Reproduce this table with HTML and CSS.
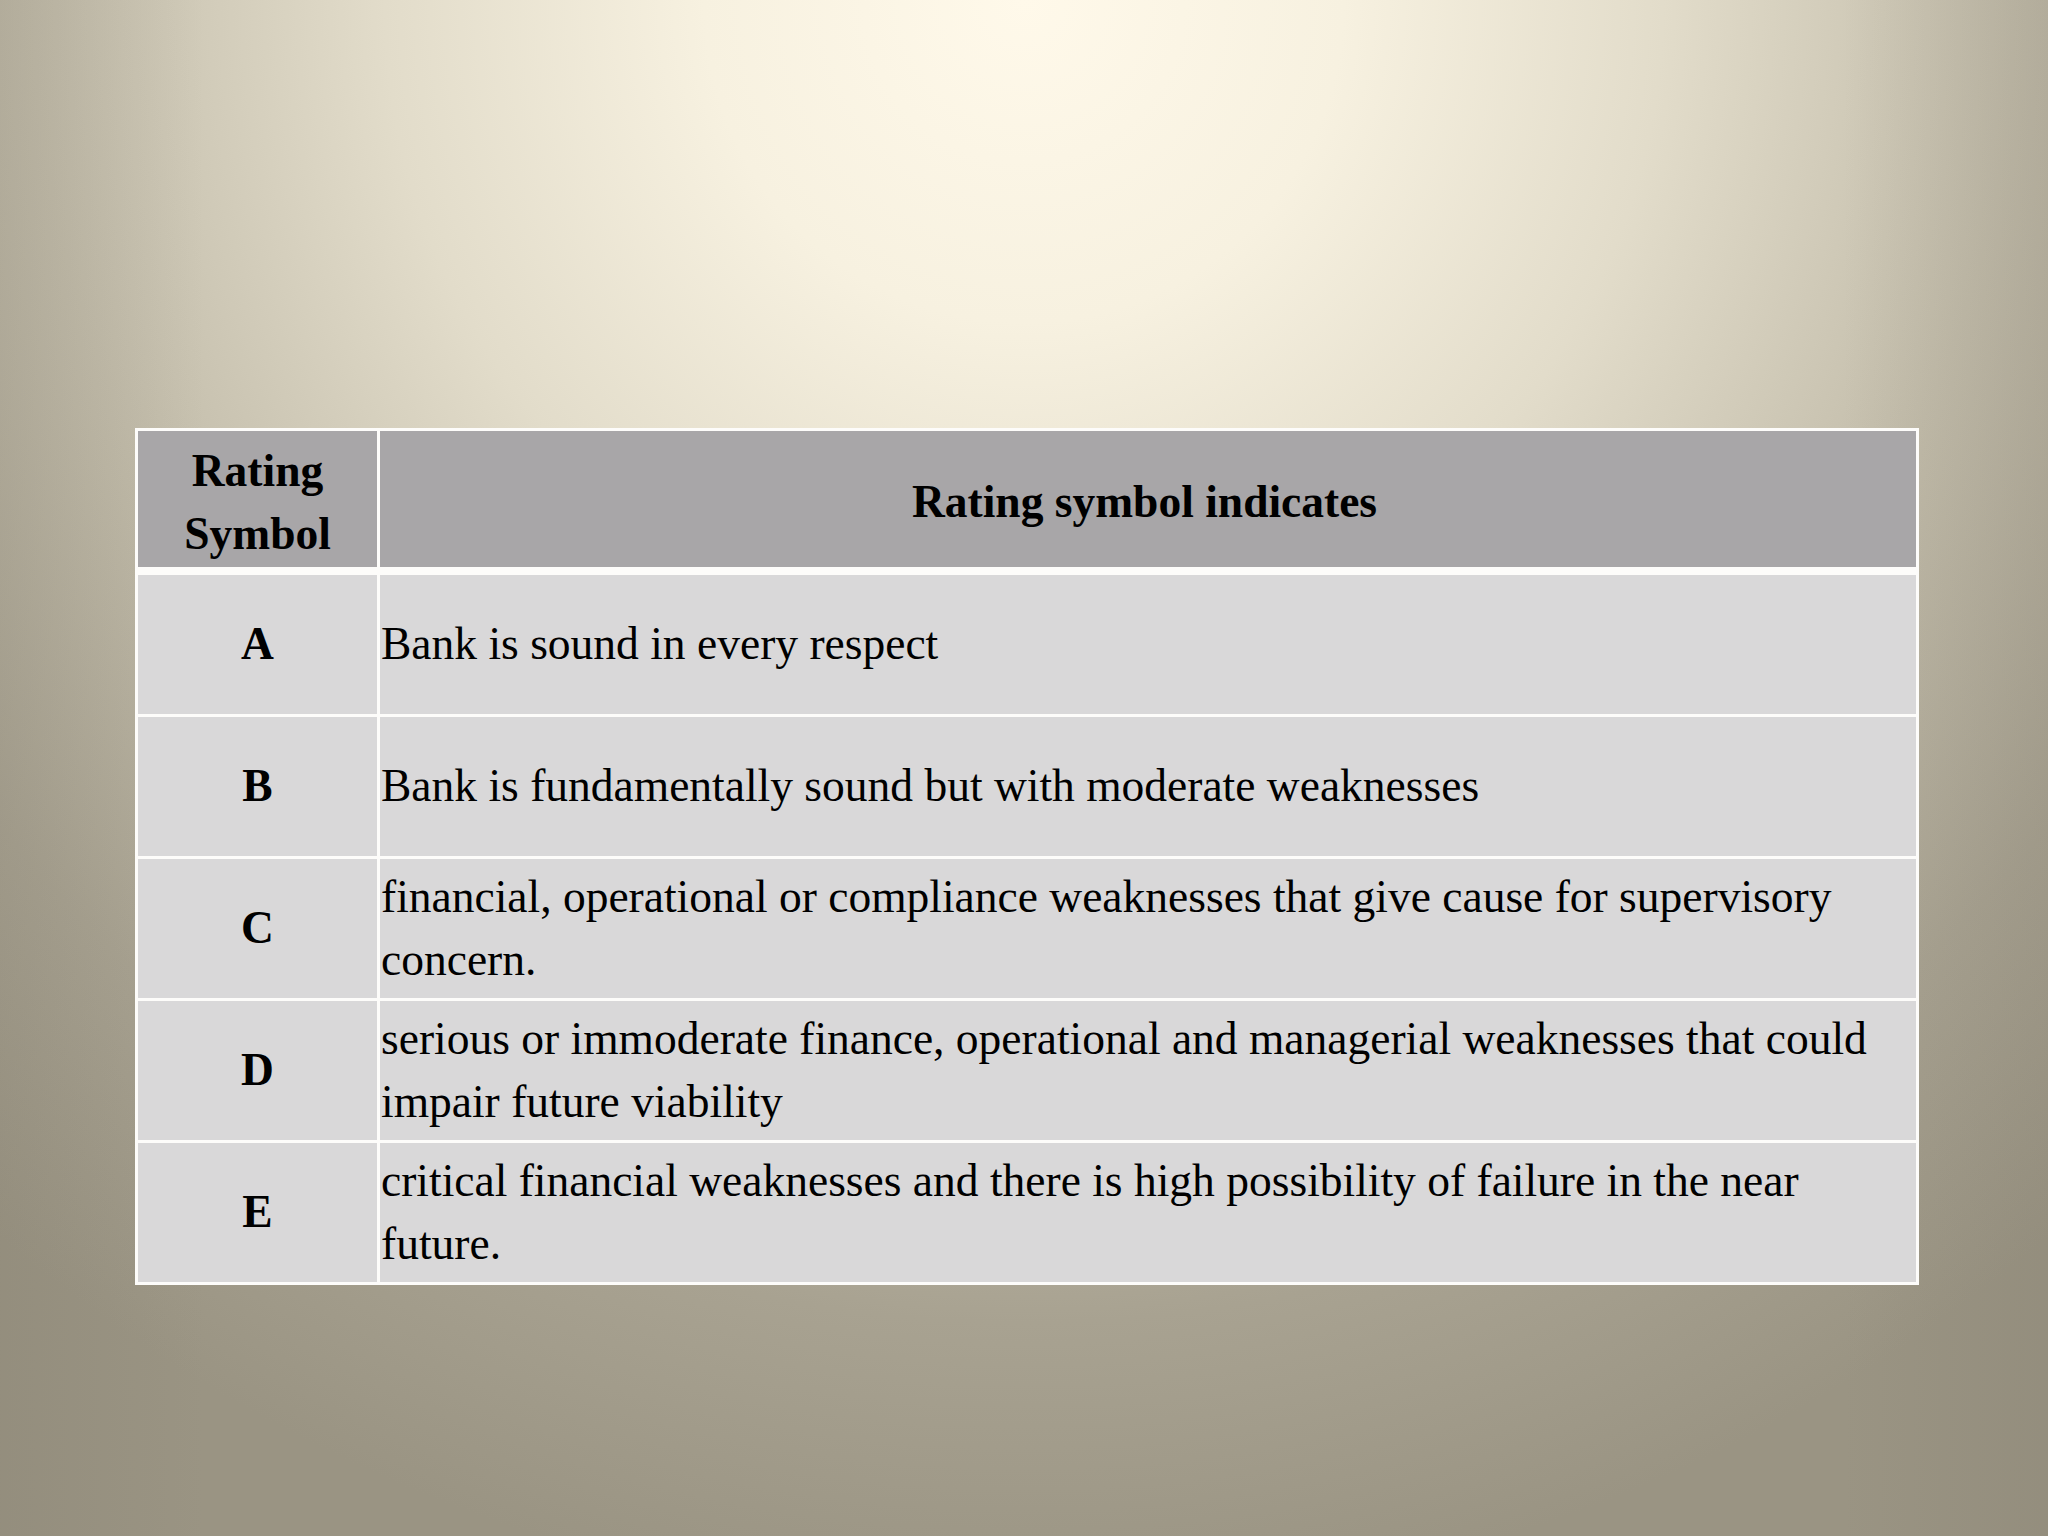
FILE: index.html
```html
<!DOCTYPE html>
<html lang="en">
<head>
<meta charset="utf-8">
<title>Rating Symbols</title>
<link rel="stylesheet" href="styles.css">
</head>
<body>
<main class="slide">
  <div class="rating-table">
    <div class="cell head sym">Rating Symbol</div>
    <div class="cell head desc">Rating symbol indicates</div>

    <div class="cell sym">A</div>
    <div class="cell desc">Bank is sound in every respect</div>

    <div class="cell sym">B</div>
    <div class="cell desc">Bank is fundamentally sound but with moderate weaknesses</div>

    <div class="cell sym">C</div>
    <div class="cell desc">financial, operational or compliance weaknesses that give cause for supervisory concern.</div>

    <div class="cell sym">D</div>
    <div class="cell desc">serious or immoderate finance, operational and managerial weaknesses that could impair future viability</div>

    <div class="cell sym">E</div>
    <div class="cell desc">critical financial weaknesses and there is high possibility of failure in the near future.</div>
  </div>
</main>
</body>
</html>
```

FILE: styles.css
```css
html, body {
  margin: 0;
  padding: 0;
}

body {
  width: 2048px;
  height: 1536px;
  overflow: hidden;
  background:
    radial-gradient(ellipse 78% 105% at 50% 0%, #fff9ea 0%, #f7f1e0 20%, #e2dcca 40%, #c2bcaa 62%, #a8a291 82%, #9a9483 100%),
    #8c8676;
  font-family: "Liberation Serif", "Times New Roman", serif;
  color: #000;
}

.slide {
  width: 2048px;
  height: 1536px;
  box-sizing: border-box;
  padding-top: 428px;
  padding-left: 135px;
  background: linear-gradient(to right, rgba(120,114,100,0.18) 0%, rgba(120,114,100,0) 10%, rgba(120,114,100,0) 90%, rgba(120,114,100,0.18) 100%);
}

.rating-table {
  width: 1784px;
  box-sizing: border-box;
  display: grid;
  grid-template-columns: 239px 1fr;
  grid-template-rows: 141px 139px 139px 139px 139px 139px;
  column-gap: 3px;
  row-gap: 3px;
  padding: 3px;
  background: #fdfcfa;
}

.cell {
  display: flex;
  align-items: center;
  font-size: 45.5px;
  line-height: 62.7px;
  background: #d9d8d9;
}

.cell.head {
  background: #a8a6a8;
  font-weight: bold;
  margin-bottom: 5px;
  padding-top: 7px;
}

.cell.sym {
  justify-content: center;
  text-align: center;
  font-weight: bold;
  padding-left: 20px;
  padding-right: 20px;
}

.cell.desc {
  padding-left: 1px;
  padding-right: 8px;
}

.cell.head.desc {
  justify-content: center;
  text-align: center;
}
```
